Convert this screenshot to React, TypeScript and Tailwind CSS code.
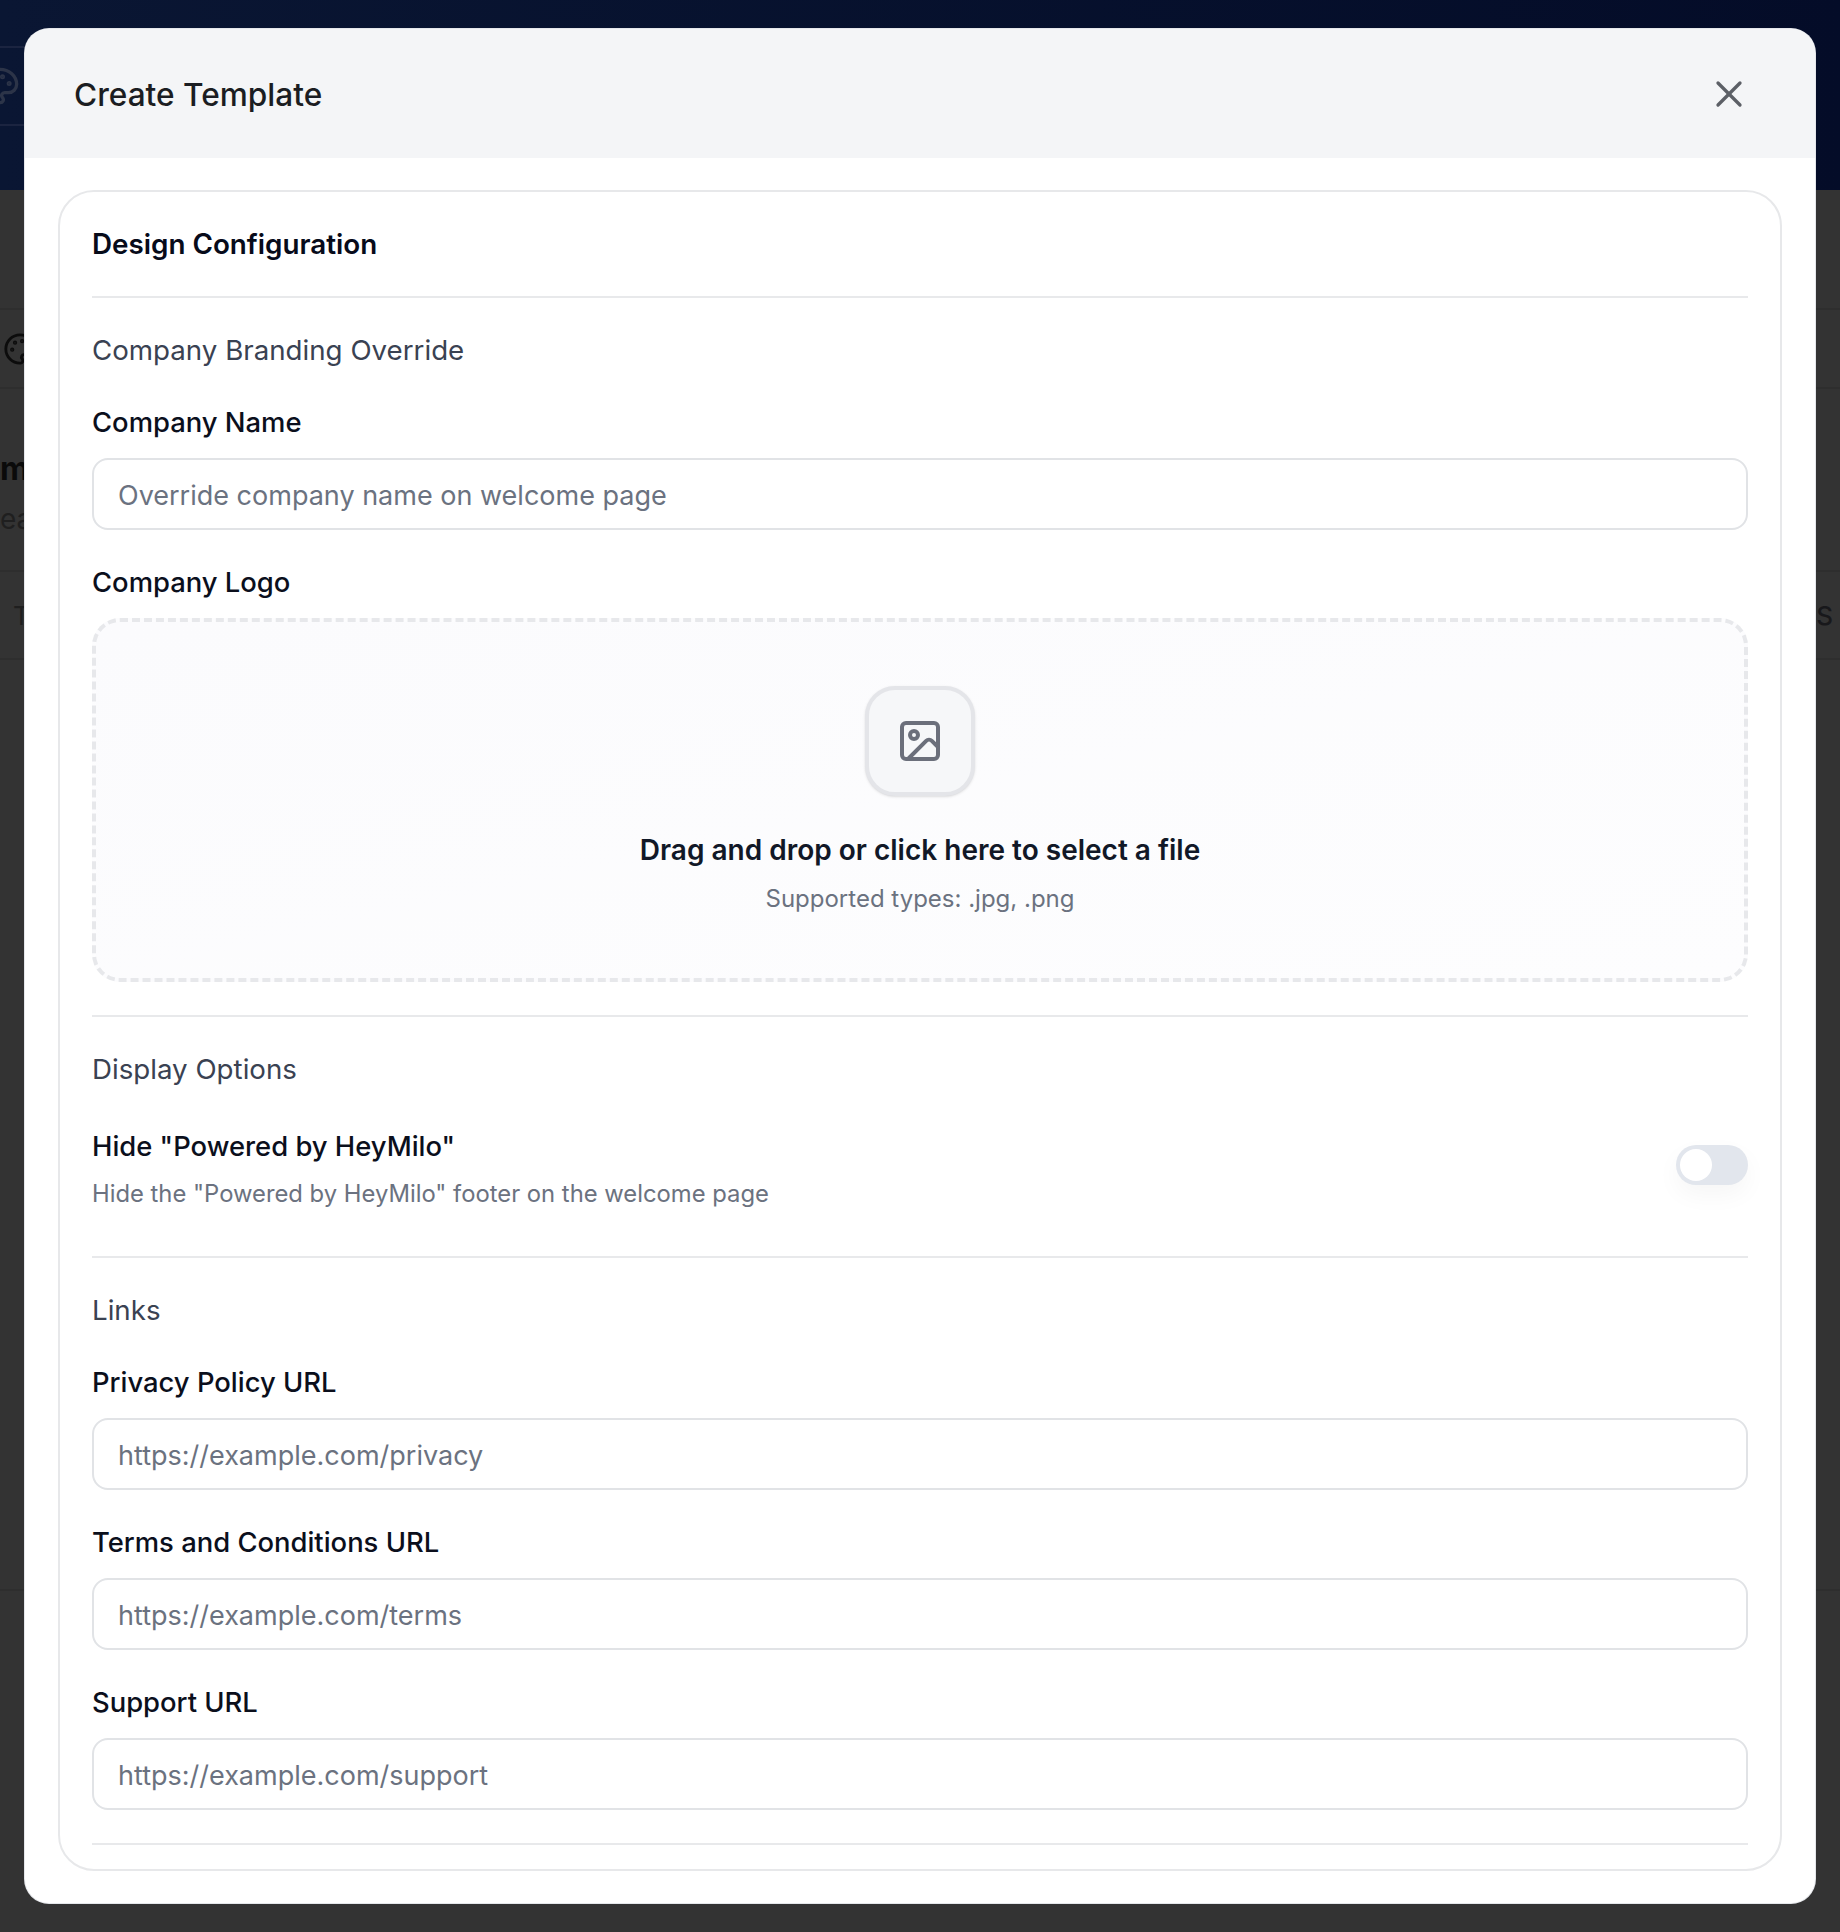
import { Image, Palette, X } from "lucide-react"

const Divider = ({ className = "" }: { className?: string }) => (
  <div className={`h-[2px] bg-[#e8e9eb] ${className}`} />
)

const SectionTitle = ({ children, className = "" }: { children: string; className?: string }) => (
  <p className={`text-[27.7px] leading-[34px] text-[#3a4252] ${className}`}>{children}</p>
)

const Field = ({ label, placeholder, className = "" }: { label: string; placeholder: string; className?: string }) => (
  <div className={className}>
    <p className="text-[27.4px] font-medium leading-[34px] text-[#0b0f1c]">{label}</p>
    <input
      placeholder={placeholder}
      className="mt-[19px] block h-[72px] w-full rounded-[16px] border-2 border-[#e1e3e6] bg-white px-[24px] pt-[2px] text-[27px] outline-none placeholder:text-[#6b7280]"
    />
  </div>
)

const Backdrop = () => (
  <div className="flex h-[1932px] flex-col overflow-hidden bg-[#333333]">
    <div className="h-[190px] bg-gradient-to-r from-[#0a1633] to-[#040c28] pt-[46px]">
      <div className="-ml-[40px] flex h-[80px] w-[80px] items-center justify-center rounded-[14px] border-2 border-[#1b2440]">
        <Palette size={40} className="text-[#2c3448]" />
      </div>
    </div>
    <div className="mt-[118px] flex h-[81px] items-center border-y-2 border-[#2e2e2e] pl-[3px]">
      <Palette size={34} className="text-[#0c0c0c]" />
    </div>
    <p className="mt-[60px] text-[32px] font-bold leading-[40px] text-[#0a0a0a]">m</p>
    <p className="mt-[12px] text-[28px] leading-[36px] text-[#1f1f1f]">ea</p>
    <div className="mt-[33px] flex h-[90px] items-center justify-between border-y-2 border-[#2e2e2e] pl-[13px] pr-[5px] text-[26px] text-[#1f1f1f]">
      <span>T</span>
      <span className="font-medium tracking-[2px] text-[#18181b]">IS</span>
    </div>
    <div className="mt-[929px] border-t-2 border-[#2e2e2e]" />
  </div>
)

const App = () => {
  return (
    <div className="relative h-[1932px] w-[1840px] overflow-hidden font-['Inter',sans-serif]">
      <Backdrop />
      <div className="absolute left-[25px] top-[29px] w-[1790px] rounded-[24px] bg-white pb-[32px] shadow-[0_0_0_1px_#e5e7eb]">
        <div className="flex h-[129px] items-center justify-between rounded-t-[24px] bg-[#f4f5f7] pl-[49px] pr-[64px] pt-[2px]">
          <h2 className="text-[31.6px] font-medium text-[#1b1d22]">Create Template</h2>
          <X size={44} strokeWidth={1.8} className="mb-[2px] text-[#5c5f66]" />
        </div>
        <div className="mx-[33px] mt-[32px] rounded-[36px] border-2 border-[#e7e8ea] px-[32px] pb-[24px] pt-[35px]">
          <h3 className="text-[27.8px] font-semibold leading-[34px] text-[#070b1a]">Design Configuration</h3>
          <Divider className="mt-[35px]" />
          <SectionTitle className="mt-[35px]">Company Branding Override</SectionTitle>
          <Field className="mt-[38px]" label="Company Name" placeholder="Override company name on welcome page" />
          <p className="mt-[35px] text-[27.4px] font-medium leading-[34px] text-[#0b0f1c]">Company Logo</p>
          <div className="mt-[19px] flex h-[364px] flex-col items-center rounded-[28px] border-4 border-dashed border-[#e7e8eb] bg-gradient-to-br from-[#fbfbfd] to-[#fdfdfe] pt-[64px]">
            <div className="flex h-[110px] w-[110px] items-center justify-center rounded-[30px] border-4 border-[#e4e5e9] bg-[#f6f7f9] shadow-sm">
              <Image size={48} strokeWidth={2} className="text-[#6b6f7b]" />
            </div>
            <p className="mt-[37px] text-[28px] font-semibold leading-[34px] text-[#111827]">
              Drag and drop or click here to select a file
            </p>
            <p className="mt-[17px] text-[24px] leading-[30px] text-[#6b7280]">Supported types: .jpg, .png</p>
          </div>
          <Divider className="mt-[33px]" />
          <SectionTitle className="mt-[35px]">Display Options</SectionTitle>
          <div className="mt-[43px] flex items-start justify-between">
            <div>
              <p className="text-[27.4px] font-medium leading-[34px] text-[#0b0f1c]">Hide "Powered by HeyMilo"</p>
              <p className="mt-[16px] text-[23.8px] leading-[30px] text-[#6b7280]">
                Hide the "Powered by HeyMilo" footer on the welcome page
              </p>
            </div>
            <div className="mt-[16px] flex h-[40px] w-[72px] items-center rounded-full bg-[#e2e6ed] pl-[4px] shadow-[0_10px_24px_rgba(0,0,0,0.04)]">
              <div className="h-[32px] w-[32px] rounded-full bg-white" />
            </div>
          </div>
          <Divider className="mt-[47px]" />
          <SectionTitle className="mt-[35px]">Links</SectionTitle>
          <Field className="mt-[38px]" label="Privacy Policy URL" placeholder="https://example.com/privacy" />
          <Field className="mt-[35px]" label="Terms and Conditions URL" placeholder="https://example.com/terms" />
          <Field className="mt-[35px]" label="Support URL" placeholder="https://example.com/support" />
          <Divider className="mt-[33px]" />
        </div>
      </div>
    </div>
  )
}

export default App
